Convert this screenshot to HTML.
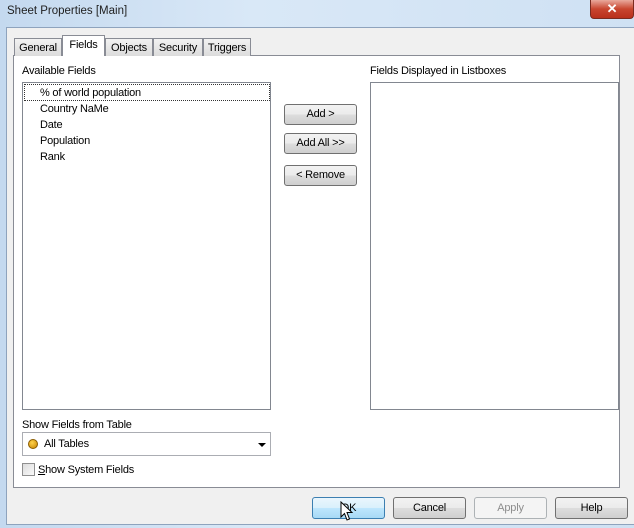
<!DOCTYPE html>
<html><head><style>
*{box-sizing:border-box;margin:0;padding:0}
body{width:634px;height:528px;overflow:hidden;background:linear-gradient(90deg,#c4d9ef,#d9e8f7 40%,#cfe1f3);font-family:"Liberation Sans",sans-serif;font-size:11px;letter-spacing:-0.2px;color:#000;position:relative}
.abs{position:absolute}
.title{left:7px;top:5px;font-size:11.5px;color:#1e1e1e;letter-spacing:0}
.close{left:590px;top:0;width:44px;height:19px;background:linear-gradient(#e9a99c,#c8452f 50%,#b9301c);border:1px solid #7a2b20;border-top:none;border-radius:0 0 4px 4px;color:#fff;font-weight:bold;text-align:center;font-size:13px;line-height:17px}
.client{left:6px;top:27px;width:628px;height:498px;background:#f0f0f0;border:1px solid #8ea3bd;border-right:none}
.panel{left:13px;top:55px;width:607px;height:433px;background:#fff;border:1px solid #898c95}
.tab{top:38px;height:18px;border:1px solid #898c95;border-bottom:none;background:linear-gradient(#f2f2f2,#dcdcdc);padding:3px 0 0;text-align:center;font-size:11px}
.tab.sel{top:35px;height:21px;background:#fff;z-index:2;padding-top:3px}
.list{border:1px solid #828790;background:#fff}
.btn{border:1px solid #707070;border-radius:3px;background:linear-gradient(#f2f2f2,#ebebeb 50%,#dddddd 51%,#cfcfcf);text-align:center;font-size:11px;line-height:19px}
.item{left:40px}
</style></head><body>
<div class="abs title">Sheet Properties [Main]</div>
<div class="abs close">✕</div>
<div class="abs client"></div>
<div class="abs panel"></div>
<div class="abs tab" style="left:14px;width:48px">General</div>
<div class="abs tab sel" style="left:62px;width:43px">Fields</div>
<div class="abs tab" style="left:105px;width:48px">Objects</div>
<div class="abs tab" style="left:153px;width:50px">Security</div>
<div class="abs tab" style="left:203px;width:48px">Triggers</div>

<div class="abs" style="left:22px;top:65px">Available Fields</div>
<div class="abs list" style="left:22px;top:82px;width:249px;height:328px"></div>
<div class="abs" style="left:24px;top:84px;width:246px;height:17px;border:1px dotted #333"></div>
<div class="abs item" style="top:87px">% of world population</div>
<div class="abs item" style="top:103px">Country NaMe</div>
<div class="abs item" style="top:119px">Date</div>
<div class="abs item" style="top:135px">Population</div>
<div class="abs item" style="top:151px">Rank</div>

<div class="abs btn" style="left:284px;top:104px;width:73px;height:21px">Add &gt;</div>
<div class="abs btn" style="left:284px;top:133px;width:73px;height:21px">Add All &gt;&gt;</div>
<div class="abs btn" style="left:284px;top:165px;width:73px;height:21px">&lt; Remove</div>

<div class="abs" style="left:370px;top:65px">Fields Displayed in Listboxes</div>
<div class="abs list" style="left:370px;top:82px;width:249px;height:328px"></div>

<div class="abs" style="left:22px;top:419px">Show Fields from Table</div>
<div class="abs" style="left:22px;top:432px;width:249px;height:24px;border:1px solid #abadb3;background:#fff"></div>
<div class="abs" style="left:28px;top:439px;width:10px;height:10px;border-radius:50%;background:radial-gradient(circle at 40% 35%,#ffd24a,#c88400);border:1px solid #8a5c00"></div>
<div class="abs" style="left:44px;top:438px">All Tables</div>
<div class="abs" style="left:258px;top:443px;width:0;height:0;border-left:4px solid transparent;border-right:4px solid transparent;border-top:4px solid #000"></div>
<div class="abs" style="left:22px;top:463px;width:13px;height:13px;border:1px solid #8f8f8f;background:linear-gradient(135deg,#dcdcdc,#fafafa)"></div>
<div class="abs" style="left:38px;top:464px"><u>S</u>how System Fields</div>

<div class="abs btn" style="left:312px;top:497px;width:73px;height:22px;border-color:#3c7fb1;background:linear-gradient(#eaf6fd,#d9f0fc 50%,#bee6fd 51%,#a7d9f5);line-height:20px">OK</div>
<svg class="abs" style="left:340px;top:501px" width="14" height="22" viewBox="0 0 14 22"><path d="M1 1 L1 16 L4.5 12.5 L7 19 L9.5 18 L7 11.5 L12 11.5 Z" fill="#fff" stroke="#000" stroke-width="1"/></svg>
<div class="abs btn" style="left:393px;top:497px;width:73px;height:22px;line-height:20px">Cancel</div>
<div class="abs btn" style="left:474px;top:497px;width:73px;height:22px;line-height:20px;color:#8d8d8d;border-color:#adb2b5;background:#f4f4f4">Apply</div>
<div class="abs btn" style="left:555px;top:497px;width:73px;height:22px;line-height:20px">Help</div>
</body></html>
